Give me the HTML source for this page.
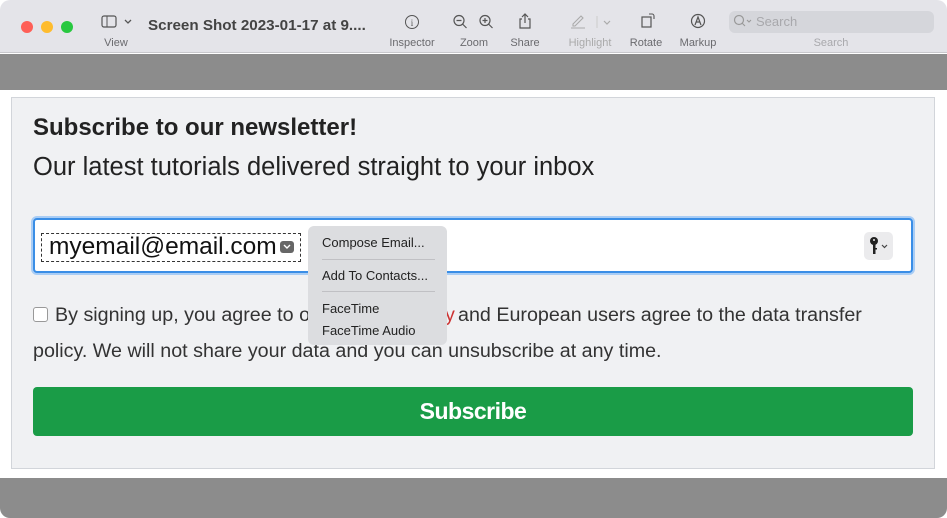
<!DOCTYPE html>
<html><head><meta charset="utf-8"><style>
*{margin:0;padding:0;box-sizing:border-box}
body{width:947px;height:518px;overflow:hidden;background:#fff;font-family:"Liberation Sans",sans-serif;position:relative}
.tb{position:absolute;left:0;top:0;width:947px;height:53px;background:#e4e4e9;border-bottom:1px solid #c8c8cc;border-radius:10px 10px 0 0}
.dot{position:absolute;top:21px;width:12px;height:12px;border-radius:50%}
.t{position:absolute;font-size:11px;color:#6a6a6e;text-align:center}
.gray{position:absolute;left:0;width:947px;background:#8c8c8c}
.box{position:absolute;left:11px;top:97px;width:924px;height:372px;background:#f0f1f3;border:1px solid #d2d5da}
.menu{position:absolute;left:308px;top:226px;width:139px;height:119px;background:#dcdde0;border-radius:6px;font-size:13px;color:#222}
.menu div{position:absolute;left:14px}
.sep{position:absolute;left:13px;width:113px;height:1px;background:#c0c0c4}
</style></head><body>
<div class="tb">
 <div class="dot" style="left:21px;background:#fe5f57"></div>
 <div class="dot" style="left:41px;background:#febc2e"></div>
 <div class="dot" style="left:61px;background:#28c840"></div>
 <svg style="position:absolute;left:101px;top:15px" width="34" height="14"><rect x="1" y="1" width="14" height="11" rx="2" fill="none" stroke="#555" stroke-width="1.2"/><line x1="6" y1="1" x2="6" y2="12" stroke="#555"/><path d="M24 5l3 3 3-3" fill="none" stroke="#555" stroke-width="1.3"/></svg>
 <div class="t" style="left:100px;top:37px;width:32px">View</div>
 <div style="position:absolute;left:148px;top:17px;font-size:15.2px;font-weight:bold;color:#444">Screen Shot 2023-01-17 at 9....</div>
 <svg style="position:absolute;left:404px;top:14px" width="16" height="16"><circle cx="8" cy="8" r="6.5" fill="none" stroke="#555"/><text x="8" y="12" font-size="9" text-anchor="middle" fill="#555" font-family="Liberation Serif">i</text></svg>
 <div class="t" style="left:384px;top:37px;width:56px">Inspector</div>
 <svg style="position:absolute;left:452px;top:14px" width="44" height="16"><circle cx="7" cy="6.5" r="5" fill="none" stroke="#555" stroke-width="1.2"/><path d="M10.5 10l4 4M4.5 6.5h5" stroke="#555" stroke-width="1.2"/><circle cx="33" cy="6.5" r="5" fill="none" stroke="#555" stroke-width="1.2"/><path d="M36.5 10l4 4M30.5 6.5h5M33 4v5" stroke="#555" stroke-width="1.2"/></svg>
 <div class="t" style="left:455px;top:37px;width:38px">Zoom</div>
 <svg style="position:absolute;left:518px;top:12px" width="14" height="18"><path d="M4 7H2v9h10V7h-2M7 11V2M4 5l3-3 3 3" fill="none" stroke="#555" stroke-width="1.2"/></svg>
 <div class="t" style="left:505px;top:37px;width:40px">Share</div>
 <svg style="position:absolute;left:570px;top:13px" width="46" height="16"><path d="M3 11l8-8 2 2-8 8H3zM1 15h14" fill="none" stroke="#aaa" stroke-width="1.1"/><line x1="27" y1="3" x2="27" y2="15" stroke="#ccc"/><path d="M34 8l3 3 3-3" fill="none" stroke="#aaa" stroke-width="1.2"/></svg>
 <div class="t" style="left:562px;top:37px;width:56px;color:#aaa">Highlight</div>
 <svg style="position:absolute;left:640px;top:12px" width="16" height="18"><rect x="2" y="5" width="9" height="10" fill="none" stroke="#555" stroke-width="1.2"/><path d="M9 2h3a2 2 0 0 1 2 2v3" fill="none" stroke="#555" stroke-width="1.1"/></svg>
 <div class="t" style="left:626px;top:37px;width:40px">Rotate</div>
 <svg style="position:absolute;left:690px;top:13px" width="16" height="16"><circle cx="8" cy="8" r="6.5" fill="none" stroke="#555" stroke-width="1.2"/><path d="M5 12l3-8 3 8M6 9h4" fill="none" stroke="#555" stroke-width="1.2"/></svg>
 <div class="t" style="left:674px;top:37px;width:48px">Markup</div>
 <div style="position:absolute;left:729px;top:11px;width:205px;height:22px;background:#d5d6db;border-radius:6px"></div>
 <svg style="position:absolute;left:733px;top:14px" width="20" height="14"><circle cx="6" cy="6" r="4.5" fill="none" stroke="#999" stroke-width="1.2"/><path d="M9 9l3 3M14 6l2 2 2-2" fill="none" stroke="#999" stroke-width="1.1"/></svg>
 <div style="position:absolute;left:756px;top:14px;font-size:13px;color:#a8a8ac">Search</div>
 <div class="t" style="left:800px;top:37px;width:62px;color:#a8a8ac">Search</div>
</div>
<div class="gray" style="top:54px;height:36px"></div>
<div class="gray" style="top:478px;height:40px;border-radius:0 0 10px 10px"></div>
<div class="box"></div>
<div style="position:absolute;left:33px;top:114px;font-size:24px;font-weight:bold;color:#222">Subscribe to our newsletter!</div>
<div style="position:absolute;left:33px;top:153px;font-size:25.5px;color:#222">Our latest tutorials delivered straight to your inbox</div>
<div style="position:absolute;left:31px;top:216px;width:884px;height:59px;border:3px solid #a9cdf5;border-radius:6px"></div>
<div style="position:absolute;left:33px;top:218px;width:880px;height:55px;background:#fff;border:2px solid #3a8ee6;border-radius:4px"></div>
<div style="position:absolute;left:41px;top:233px;width:260px;height:29px;border:1px dashed #333"></div>
<div style="position:absolute;left:49px;top:233px;font-size:24.5px;color:#111">myemail@email.com</div>
<div style="position:absolute;left:280px;top:241px;width:14px;height:12px;background:#666;border-radius:3px"></div>
<svg style="position:absolute;left:282px;top:244px" width="10" height="6"><path d="M2 1l3 3 3-3" fill="none" stroke="#fff" stroke-width="1.4"/></svg>
<div style="position:absolute;left:864px;top:232px;width:29px;height:28px;background:#ebebed;border-radius:5px"></div>
<svg style="position:absolute;left:867px;top:235px" width="24" height="22"><circle cx="7" cy="6" r="4" fill="#222"/><rect x="6" y="8" width="2.5" height="11" fill="#222"/><rect x="8" y="13" width="2" height="1.5" fill="#222"/><circle cx="7" cy="5" r="1" fill="#ebebed"/><path d="M15 10l2.5 2.5 2.5-2.5" fill="none" stroke="#444" stroke-width="1.2"/></svg>
<div style="position:absolute;left:33px;top:307px;width:15px;height:15px;border:1px solid #999;border-radius:3px;background:#fff"></div>
<div style="position:absolute;left:55px;top:304px;font-size:19.7px;color:#333;white-space:nowrap">By signing up, you agree to o</div>
<div style="position:absolute;left:445px;top:304px;font-size:19.7px;color:#c33">y</div>
<div style="position:absolute;left:458px;top:304px;font-size:19.7px;color:#333;white-space:nowrap">and European users agree to the data transfer</div>
<div style="position:absolute;left:33px;top:340px;font-size:19.7px;color:#333;white-space:nowrap">policy. We will not share your data and you can unsubscribe at any time.</div>
<div class="menu">
 <div style="top:9px">Compose Email...</div>
 <div class="sep" style="top:33px"></div>
 <div style="top:42px">Add To Contacts...</div>
 <div class="sep" style="top:65px"></div>
 <div style="top:75px">FaceTime</div>
 <div style="top:97px">FaceTime Audio</div>
</div>
<div style="position:absolute;left:33px;top:387px;width:880px;height:49px;background:#1a9c47;border-radius:4px;color:#fff;font-size:23px;font-weight:bold;text-align:center;line-height:49px;letter-spacing:-0.5px">Subscribe</div>
</body></html>
